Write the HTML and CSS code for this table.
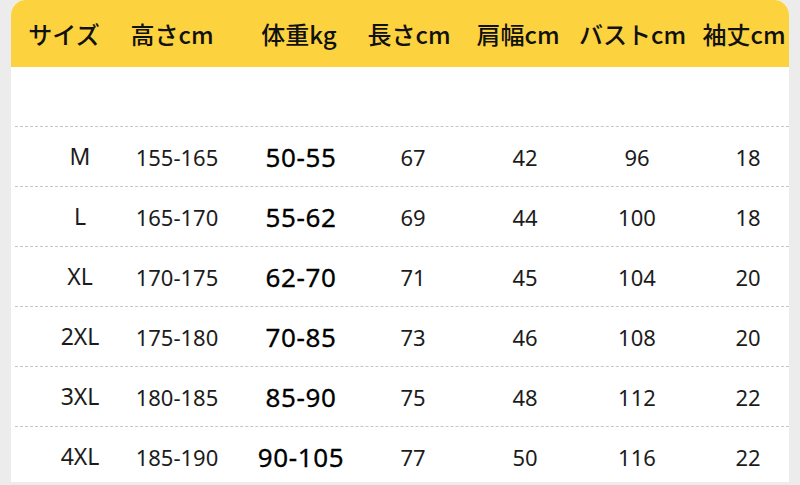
FILE: index.html
```html
<!DOCTYPE html>
<html lang="ja">
<head>
<meta charset="utf-8">
<title>サイズ表</title>
<link rel="stylesheet" href="styles.css">
</head>
<body>
<div class="card">
  <div class="row head">
    <div class="c1">サイズ</div>
    <div class="c2">高さcm</div>
    <div class="c3">体重kg</div>
    <div class="c4">長さcm</div>
    <div class="c5">肩幅cm</div>
    <div class="c6">バストcm</div>
    <div class="c7">袖丈cm</div>
  </div>
  <div class="row blank"></div>
  <div class="row data">
    <div class="c1">M</div><div class="c2">155-165</div><div class="c3 w">50-55</div><div class="c4">67</div><div class="c5">42</div><div class="c6">96</div><div class="c7">18</div>
  </div>
  <div class="row data">
    <div class="c1">L</div><div class="c2">165-170</div><div class="c3 w">55-62</div><div class="c4">69</div><div class="c5">44</div><div class="c6">100</div><div class="c7">18</div>
  </div>
  <div class="row data">
    <div class="c1">XL</div><div class="c2">170-175</div><div class="c3 w">62-70</div><div class="c4">71</div><div class="c5">45</div><div class="c6">104</div><div class="c7">20</div>
  </div>
  <div class="row data">
    <div class="c1">2XL</div><div class="c2">175-180</div><div class="c3 w">70-85</div><div class="c4">73</div><div class="c5">46</div><div class="c6">108</div><div class="c7">20</div>
  </div>
  <div class="row data">
    <div class="c1">3XL</div><div class="c2">180-185</div><div class="c3 w">85-90</div><div class="c4">75</div><div class="c5">48</div><div class="c6">112</div><div class="c7">22</div>
  </div>
  <div class="row data">
    <div class="c1">4XL</div><div class="c2">185-190</div><div class="c3 w">90-105</div><div class="c4">77</div><div class="c5">50</div><div class="c6">116</div><div class="c7">22</div>
  </div>
</div>
</body>
</html>
```

FILE: styles.css
```css
html, body {
  margin: 0;
  padding: 0;
  background: #ececed;
  width: 800px;
  height: 485px;
  overflow: hidden;
}
body {
  padding-left: 11px;
  box-sizing: border-box;
}
.card {
  width: 778px;
  height: 482px;
  background: #ffffff;
  border-radius: 15px 15px 0 0;
  overflow: hidden;
}
.row {
  display: grid;
  grid-template-columns: 116px 110px 118px 112px 112px 112px 98px;
  align-items: center;
  text-align: center;
  white-space: nowrap;
}
.head {
  height: 67px;
  background: #fcd33e;
  font-family: "Noto Sans CJK JP", "Noto Sans", sans-serif;
  font-size: 24px;
  font-weight: 500;
  color: #111;
  line-height: 1;
}
.head .c1 { padding-right: 10px; }
.head .c2 { padding-right: 20px; }
.head .c3 { padding-left: 6px; }
.head .c4 { padding-right: 4px; }
.head .c5 { padding-right: 10px; }
.head .c6 { padding-right: 6px; }
.head .c7 { padding-left: 8px; }
.blank {
  height: 59px;
}
.data {
  height: 59px;
  margin-left: 4px;
  border-top: 1px dashed #c6c6c6;
  font-family: "Noto Sans", "Open Sans", sans-serif;
  font-size: 22px;
  color: #1c1c1c;
  line-height: 1;
}
.data > div { margin-left: -4px; }
.data .c1 { padding-left: 18px; font-size: 23px; }
.data .c2 { padding-right: 14px; }
.data .c3 { padding-left: 6px; }
.data .c7 { padding-left: 12px; }
.data .w {
  font-size: 26px;
  font-weight: 400;
  letter-spacing: 0.6px;
  color: #000;
  -webkit-text-stroke: 0.3px #000;
}
```
